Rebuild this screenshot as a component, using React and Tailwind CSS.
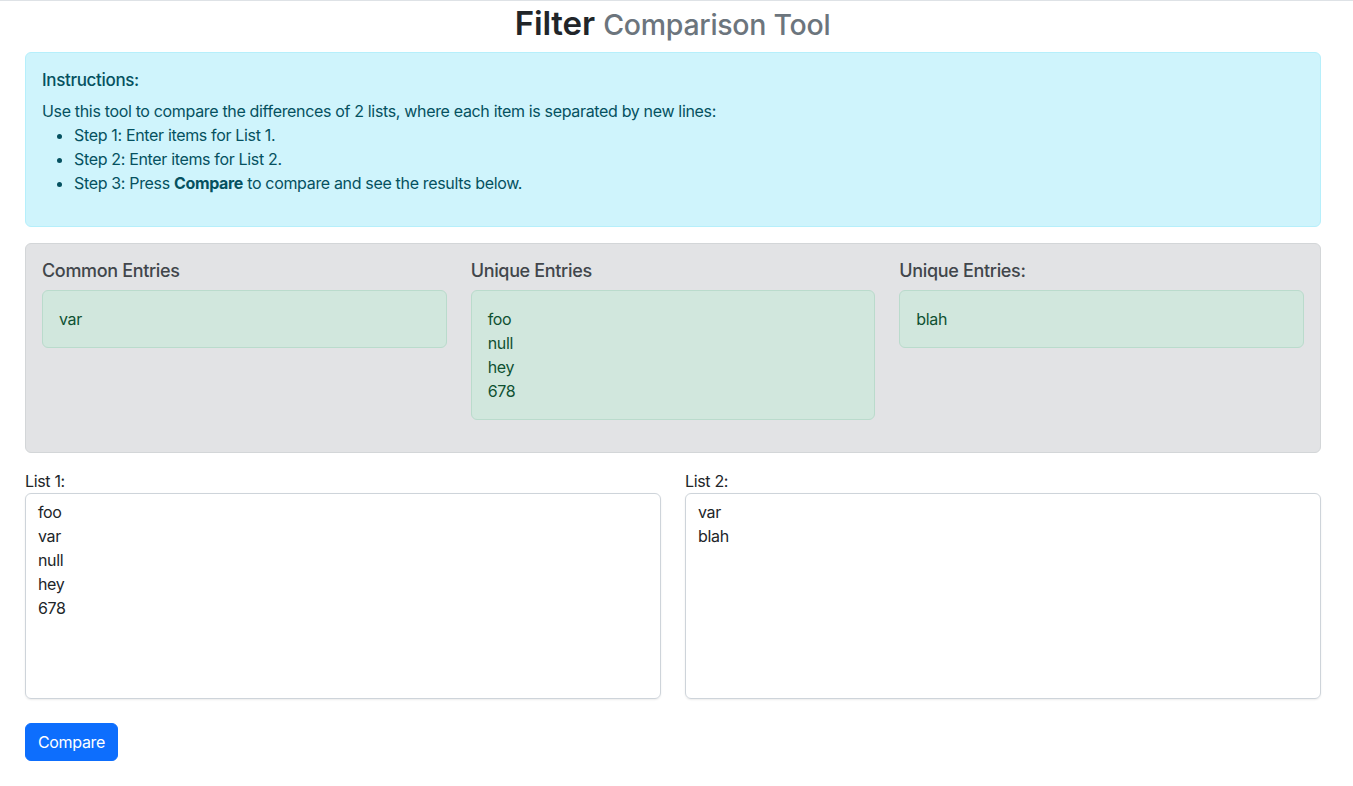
import React, { useState } from "react";

const font = {
  fontFamily: 'Inter, "Noto Sans", "Liberation Sans", sans-serif',
  letterSpacing: "-0.021em",
};

/* compare helpers */
const toLines = (s) =>
  s
    .split("\n")
    .map((x) => x.trim())
    .filter(Boolean);

function compareLists(a, b) {
  const l1 = toLines(a);
  const l2 = toLines(b);
  return {
    common: l1.filter((x) => l2.includes(x)),
    only1: l1.filter((x) => !l2.includes(x)),
    only2: l2.filter((x) => !l1.includes(x)),
  };
}

function ResultBox({ title, items }) {
  return (
    <div>
      <h5 className="text-[18px] font-medium leading-[22px] mb-2 text-[#41464b]">{title}</h5>
      <div className="rounded-md border border-[#badbcc] bg-[#d1e7dd] text-[#0f5132] p-4 text-base leading-6">
        {items.map((x, i) => (
          <div key={i}>{x}</div>
        ))}
      </div>
    </div>
  );
}

export default function App() {
  const [list1, setList1] = useState("foo\nvar\nnull\nhey\n678");
  const [list2, setList2] = useState("var\nblah");
  const [res, setRes] = useState(() => compareLists("foo\nvar\nnull\nhey\n678", "var\nblah"));

  return (
    <div className="min-h-screen bg-white text-[#212529] border-t border-[#dee2e6]" style={font}>
      <h1 className="text-center text-[32px] font-medium leading-[38px] pt-[3px] pr-[8px] mb-[8px] tracking-[-0.005em]">
        <span className="font-semibold text-[33px]">Filter</span>{" "}
        <span className="text-[#6c757d] text-[28.5px] tracking-[-0.01em]">Comparison Tool</span>
      </h1>

      <div className="ml-[25px] w-[1296px] pb-6">
        {/* instructions */}
        <div className="rounded-md border border-[#b6effb] bg-[#cff4fc] text-[#055160] p-4 mb-4">
          <h5 className="text-[17px] font-medium leading-[22px] mb-2">Instructions:</h5>
          <p className="text-base leading-6">
            Use this tool to compare the differences of 2 lists, where each item is separated by new lines:
          </p>
          <ul className="list-disc pl-8 mb-[15px] text-base leading-6">
            <li>Step 1: Enter items for List 1.</li>
            <li>Step 2: Enter items for List 2.</li>
            <li>
              Step 3: Press <b className="font-bold">Compare</b> to compare and see the results below.
            </li>
          </ul>
        </div>

        {/* results */}
        <div className="rounded-md border border-[#d3d6d8] bg-[#e2e3e5] p-4">
          <div className="grid grid-cols-3 gap-6 items-start mb-4">
            <ResultBox title="Common Entries" items={res.common} />
            <ResultBox title="Unique Entries" items={res.only1} />
            <ResultBox title="Unique Entries:" items={res.only2} />
          </div>
        </div>

        {/* inputs */}
        <div className="grid grid-cols-2 gap-6 mt-4">
          <div>
            <label className="block text-base leading-6">List 1:</label>
            <textarea
              rows={8}
              value={list1}
              onChange={(e) => setList1(e.target.value)}
              className="block w-full resize-none rounded-md border border-[#ced4da] px-3 py-1.5 text-base leading-6 shadow-[0_1px_2px_rgba(0,0,0,0.08)] outline-none"
              style={font}
            />
          </div>
          <div>
            <label className="block text-base leading-6">List 2:</label>
            <textarea
              rows={8}
              value={list2}
              onChange={(e) => setList2(e.target.value)}
              className="block w-full resize-none rounded-md border border-[#ced4da] px-3 py-1.5 text-base leading-6 shadow-[0_1px_2px_rgba(0,0,0,0.08)] outline-none"
              style={font}
            />
          </div>
        </div>

        <button
          onClick={() => setRes(compareLists(list1, list2))}
          className="mt-6 rounded-md bg-[#0d6efd] text-white px-3 py-1.5 text-base leading-6 border border-[#0d6efd]"
        >
          Compare
        </button>
      </div>
    </div>
  );
}
